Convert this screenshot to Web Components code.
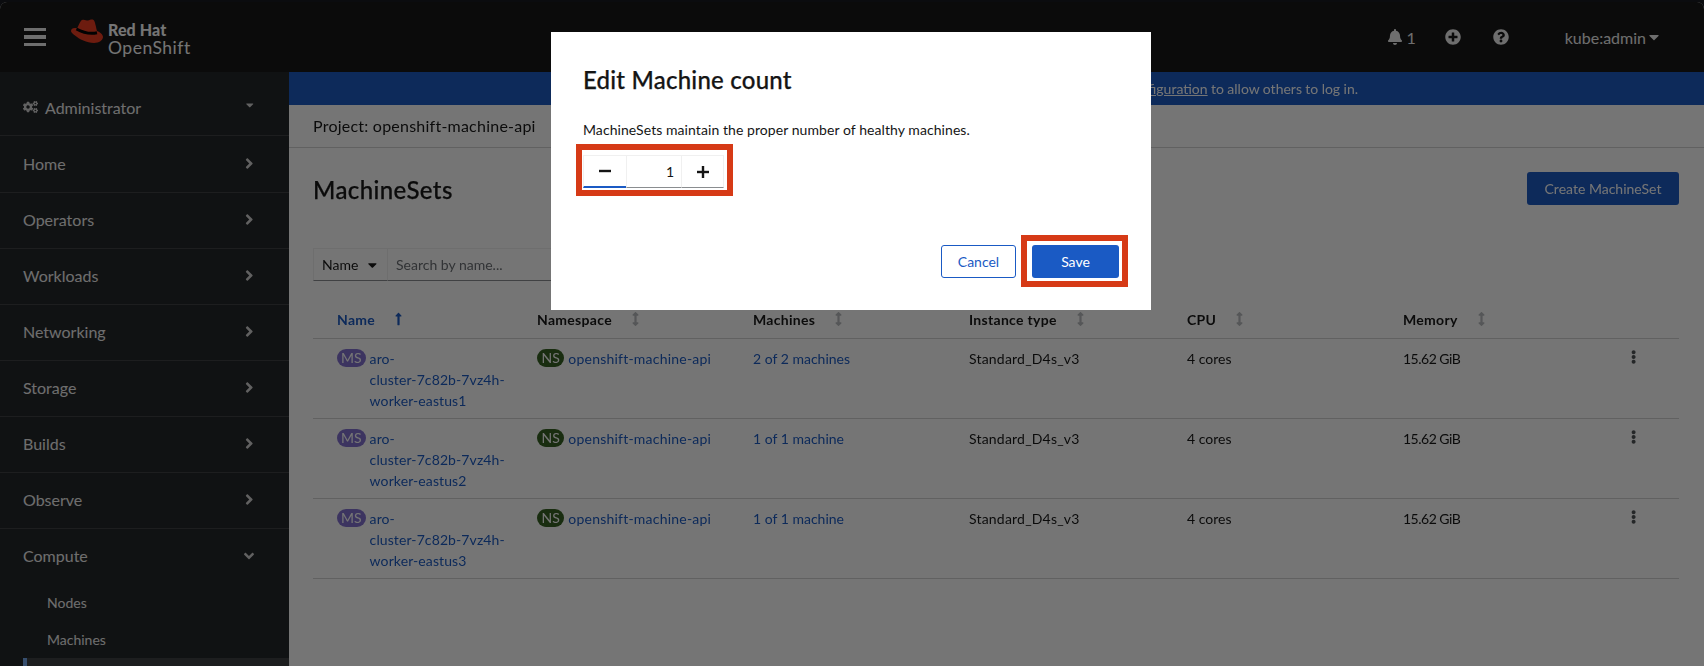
<!DOCTYPE html>
<html lang="en">
<head>
<meta charset="utf-8">
<title>MachineSets</title>
<style>
  html, body { margin: 0; height: 100%; overflow: hidden; background: #14181d; }
  body { font: 14px/21px Lato, "Noto Sans", sans-serif; color: #151515; }
</style>
</head>
<body>

<os-app>
  <os-masthead slot="top"></os-masthead>
  <os-sidebar slot="side">
    <nav-item perspective>Administrator</nav-item>
    <nav-item first>Home</nav-item>
    <nav-item>Operators</nav-item>
    <nav-item>Workloads</nav-item>
    <nav-item>Networking</nav-item>
    <nav-item>Storage</nav-item>
    <nav-item>Builds</nav-item>
    <nav-item>Observe</nav-item>
    <nav-item open>Compute</nav-item>
    <nav-sub>Nodes</nav-sub>
    <nav-sub>Machines</nav-sub>
    <nav-sub active></nav-sub>
  </os-sidebar>
  <info-banner><u>figuration</u> to allow others to log in.</info-banner>
  <project-bar>Project: openshift-machine-api</project-bar>
  <page-head>MachineSets</page-head>
  <filter-bar></filter-bar>
  <ms-table>
    <ms-row>
      <span slot="name">aro-<br>cluster-7c82b-7vz4h-<br>worker-eastus1</span>
      <span slot="machines">2 of 2 machines</span>
    </ms-row>
    <ms-row>
      <span slot="name">aro-<br>cluster-7c82b-7vz4h-<br>worker-eastus2</span>
      <span slot="machines">1 of 1 machine</span>
    </ms-row>
    <ms-row>
      <span slot="name">aro-<br>cluster-7c82b-7vz4h-<br>worker-eastus3</span>
      <span slot="machines">1 of 1 machine</span>
    </ms-row>
  </ms-table>
</os-app>

<edit-modal></edit-modal>

<script>
// fontawesome style paths, used all over the page
const ICONS = {
  bell: ['0 0 448 512', 'M224 512c35.32 0 63.97-28.65 63.97-64H160.03c0 35.35 28.65 64 63.97 64zm215.39-149.71c-19.32-20.76-55.47-51.99-55.47-154.29 0-77.7-54.48-139.9-127.94-155.16V32c0-17.67-14.32-32-31.98-32s-31.98 14.33-31.98 32v20.84C118.56 68.1 64.08 130.3 64.08 208c0 102.3-36.15 133.53-55.47 154.29-6 6.45-8.66 14.16-8.61 21.71.11 16.4 12.98 32 32.1 32h383.8c19.12 0 32-15.6 32.1-32 .05-7.55-2.61-15.27-8.61-21.71z'],
  plus: ['0 0 512 512', 'M256 8C119 8 8 119 8 256s111 248 248 248 248-111 248-248S393 8 256 8zm144 276c0 6.6-5.4 12-12 12h-92v92c0 6.6-5.4 12-12 12h-56c-6.6 0-12-5.4-12-12v-92h-92c-6.6 0-12-5.4-12-12v-56c0-6.6 5.4-12 12-12h92v-92c0-6.6 5.4-12 12-12h56c6.6 0 12 5.4 12 12v92h92c6.6 0 12 5.4 12 12v56z'],
  help: ['0 0 512 512', 'M504 256c0 136.997-111.043 248-248 248S8 392.997 8 256C8 119.083 119.043 8 256 8s248 111.083 248 248zM262.655 90c-54.497 0-89.255 22.957-116.549 63.758-3.536 5.286-2.353 12.415 2.715 16.258l34.699 26.31c5.205 3.947 12.621 3.008 16.665-2.122 17.864-22.658 30.113-35.797 57.303-35.797 20.429 0 45.698 13.148 45.698 32.958 0 14.976-12.363 22.667-32.534 33.976C247.128 238.528 216 254.941 216 296v4c0 6.627 5.373 12 12 12h56c6.627 0 12-5.373 12-12v-1.333c0-28.462 83.186-29.647 83.186-106.667 0-58.002-60.165-102-116.531-102zM256 338c-25.365 0-46 20.635-46 46 0 25.364 20.635 46 46 46s46-20.636 46-46c0-25.365-20.635-46-46-46z'],
  kebab: ['0 0 192 512', 'M96 184c39.8 0 72 32.2 72 72s-32.2 72-72 72-72-32.2-72-72 32.2-72 72-72zM24 80c0 39.8 32.2 72 72 72s72-32.2 72-72S135.8 8 96 8 24 40.2 24 80zm0 352c0 39.8 32.2 72 72 72s72-32.2 72-72-32.2-72-72-72-72 32.2-72 72z'],
  right: ['0 0 256 512', 'M224.3 273l-136 136c-9.4 9.4-24.6 9.4-33.9 0l-22.6-22.6c-9.4-9.4-9.4-24.6 0-33.9l96.4-96.4-96.4-96.4c-9.4-9.4-9.4-24.6 0-33.9L54.3 103c9.4-9.4 24.6-9.4 33.9 0l136 136c9.5 9.4 9.5 24.6.1 34z'],
  down: ['0 0 320 512', 'M143 352.3L7 216.3c-9.4-9.4-9.4-24.6 0-33.9l22.6-22.6c9.4-9.4 24.6-9.4 33.9 0l96.4 96.4 96.4-96.4c9.4-9.4 24.6-9.4 33.9 0l22.6 22.6c9.4 9.4 9.4 24.6 0 33.9l-136 136c-9.2 9.4-24.4 9.4-33.8 0z'],
  caret: ['0 0 320 512', 'M31.3 192h257.3c17.8 0 26.7 21.5 14.1 34.1L174.1 354.8c-7.8 7.8-20.5 7.8-28.3 0L17.2 226.1C4.6 213.5 13.5 192 31.3 192z'],
  sort: ['0 0 256 512', 'M214.059 377.941H168V134.059h46.059c21.382 0 32.09-25.851 16.971-40.971L144.971 7.029c-9.373-9.373-24.568-9.373-33.941 0L24.971 93.088c-15.119 15.119-4.411 40.971 16.971 40.971H88v243.882H41.941c-21.382 0-32.09 25.851-16.971 40.971l86.059 86.059c9.373 9.373 24.568 9.373 33.941 0l86.059-86.059c15.12-15.119 4.412-40.971-16.97-40.971z'],
  up: ['0 0 256 512', 'M88 166.059V468c0 6.627 5.373 12 12 12h56c6.627 0 12-5.373 12-12V166.059h46.059c21.382 0 32.09-25.851 16.971-40.971l-86.059-86.059c-9.373-9.373-24.569-9.373-33.941 0l-86.059 86.059c-15.119 15.119-4.411 40.971 16.971 40.971H88z'],
  cogs: ['0 0 640 512', 'M512.1 191l-8.2 14.3c-3 5.3-9.4 7.5-15.1 5.4-11.8-4.4-22.6-10.7-32.1-18.6-4.6-3.8-5.8-10.5-2.8-15.7l8.2-14.3c-6.9-8-12.3-17.3-15.9-27.4h-16.5c-6 0-11.2-4.3-12.2-10.3-2-12-2.1-24.6 0-37.1 1-6 6.2-10.4 12.2-10.4h16.5c3.6-10.1 9-19.4 15.9-27.4l-8.2-14.3c-3-5.2-1.9-11.9 2.8-15.7 9.5-7.9 20.4-14.2 32.1-18.6 5.7-2.1 12.1.1 15.1 5.4l8.2 14.3c10.5-1.9 21.2-1.9 31.7 0L552 6.3c3-5.3 9.4-7.5 15.1-5.4 11.8 4.4 22.6 10.7 32.1 18.6 4.6 3.8 5.8 10.5 2.8 15.7l-8.2 14.3c6.9 8 12.3 17.3 15.9 27.4h16.5c6 0 11.2 4.3 12.2 10.3 2 12 2.1 24.6 0 37.1-1 6-6.2 10.4-12.2 10.4h-16.5c-3.6 10.1-9 19.4-15.9 27.4l8.2 14.3c3 5.2 1.9 11.9-2.8 15.7-9.5 7.9-20.4 14.2-32.1 18.6-5.7 2.1-12.1-.1-15.1-5.4l-8.2-14.3c-10.4 1.9-21.2 1.9-31.7 0zm-10.5-58.8c38.5 29.6 82.4-14.3 52.8-52.8-38.5-29.7-82.4 14.3-52.8 52.8zM386.3 286.1l33.7 16.8c10.1 5.8 14.5 18.1 10.5 29.1-8.9 24.2-26.4 46.4-42.6 65.8-7.4 8.9-20.2 11.1-30.3 5.3l-29.1-16.8c-16 13.7-34.6 24.6-54.9 31.7v33.6c0 11.6-8.3 21.6-19.7 23.6-24.6 4.2-50.4 4.4-75.9 0-11.5-2-20-11.9-20-23.6V418c-20.3-7.2-38.9-18-54.9-31.7L74 403c-10 5.8-22.9 3.6-30.3-5.3-16.2-19.4-33.3-41.6-42.2-65.7-4-10.9.4-23.2 10.5-29.1l33.3-16.8c-3.9-20.9-3.9-42.4 0-63.4L12 205.8c-10.1-5.8-14.6-18.1-10.5-29 8.9-24.2 26-46.4 42.2-65.8 7.4-8.9 20.2-11.1 30.3-5.3l29.1 16.8c16-13.7 34.6-24.6 54.9-31.7V57.1c0-11.5 8.2-21.5 19.6-23.5 24.6-4.2 50.5-4.4 76-.1 11.5 2 20 11.9 20 23.6v33.6c20.3 7.2 38.9 18 54.9 31.7l29.1-16.8c10-5.8 22.9-3.6 30.3 5.3 16.2 19.4 33.2 41.6 42.1 65.8 4 10.9.1 23.2-10 29.1l-33.7 16.8c3.9 21 3.9 42.5 0 63.5zm-117.6 21.1c59.2-77-28.7-164.9-105.7-105.7-59.2 77 28.7 164.9 105.7 105.7zm243.4 182.7l-8.2 14.3c-3 5.3-9.4 7.5-15.1 5.4-11.8-4.4-22.6-10.7-32.1-18.6-4.6-3.8-5.8-10.5-2.8-15.7l8.2-14.3c-6.9-8-12.3-17.3-15.9-27.4h-16.5c-6 0-11.2-4.3-12.2-10.3-2-12-2.1-24.6 0-37.1 1-6 6.2-10.4 12.2-10.4h16.5c3.6-10.1 9-19.4 15.9-27.4l-8.2-14.3c-3-5.2-1.9-11.9 2.8-15.7 9.5-7.9 20.4-14.2 32.1-18.6 5.7-2.1 12.1.1 15.1 5.4l8.2 14.3c10.5-1.9 21.2-1.9 31.7 0l8.2-14.3c3-5.3 9.4-7.5 15.1-5.4 11.8 4.4 22.6 10.7 32.1 18.6 4.6 3.8 5.8 10.5 2.8 15.7l-8.2 14.3c6.9 8 12.3 17.3 15.9 27.4h16.5c6 0 11.2 4.3 12.2 10.3 2 12 2.1 24.6 0 37.1-1 6-6.2 10.4-12.2 10.4h-16.5c-3.6 10.1-9 19.4-15.9 27.4l8.2 14.3c3 5.2 1.9 11.9-2.8 15.7-9.5 7.9-20.4 14.2-32.1 18.6-5.7 2.1-12.1-.1-15.1-5.4l-8.2-14.3c-10.4 1.9-21.2 1.9-31.7 0zM501.6 431c38.5 29.6 82.4-14.3 52.8-52.8-38.5-29.6-82.4 14.3-52.8 52.8z']
}

// small helper, every element below is the same shape: styles + markup in an open shadow root
function define(tag, html, setup) {
  const template = document.createElement('template')
  template.innerHTML = html
  customElements.define(tag, class extends HTMLElement {
    constructor() {
      super()
      const shadow = this.attachShadow({ mode: 'open' })
      shadow.append(template.content.cloneNode(true))
      if (setup) setup.call(this, shadow)
    }
  })
}

customElements.define('os-icon', class extends HTMLElement {
  constructor() {
    super()
    this.attachShadow({ mode: 'open' })
  }

  static get observedAttributes() {
    return ['name', 'h']
  }

  attributeChangedCallback() {
    const icon = ICONS[this.getAttribute('name')]
    if (!icon) return
    const h = this.getAttribute('h') || 14
    this.shadowRoot.innerHTML = `
      <style>:host { display: inline-flex; flex: none; } svg { display: block; fill: currentColor; }</style>
      <svg viewBox="${icon[0]}" height="${h}"><path d="${icon[1]}"></path></svg>`
  }
})

define('os-app', `
  <style>
    :host {
      display: grid;
      grid-template-columns: 289px 1fr;
      grid-template-rows: 70px 1fr;
      position: fixed;
      inset: 2px 0 0 0;
      overflow: hidden;
      border-radius: 7px 7px 0 0;
      background: #fff;
    }
    .top { grid-column: 1 / 3; }
    .main { min-width: 0; display: flex; flex-direction: column; }
  </style>
  <div class="top"><slot name="top"></slot></div>
  <slot name="side"></slot>
  <div class="main"><slot></slot></div>
`)

define('os-masthead', `
  <style>
    :host { display: flex; align-items: center; height: 70px; background: #151515; color: #fff; }
    .burger { display: flex; flex-direction: column; gap: 4px; margin-left: 24px; width: 22px; }
    .burger i { display: block; height: 3.4px; background: #f0f0f0; }
    .hat { display: block; margin: -13px 0 0 25px; }
    .logo { margin: 4px 0 0 5px; font: 400 17.500px/18px Lato, sans-serif; letter-spacing: .5px; }
    .logo b { display: block; font-weight: 900; font-size: 16px; letter-spacing: .1px; }
    .right { margin-left: auto; margin-right: 45px; display: flex; align-items: center; color: #f0f0f0; font-size: 16px; }
    .count { margin-left: 4px; margin-right: 29px; }
    .gap { margin-right: 32px; display: flex; }
    .user { margin-left: 56px; display: flex; align-items: center; gap: 3px; }
  </style>
  <div class="burger"><i></i><i></i><i></i></div>
  <svg class="hat" width="32" height="24" viewBox="0 0 32 24">
    <path fill="#ee3a1e" d="M11 1C13 0 15 1.5 17 1.5 19 1 21 0 22.5 1 24 2 25 8 26 12 29 13 32 15.5 32 18 32 21 28 24 23 24 16 24 8 20 4 16.5 1.5 14.5 0 13.5 0 12 0 9.5 3 8.5 6 9.5 7.500 7 9 2 11 1Z"/>
    <path fill="none" stroke="#000" stroke-width="3" d="M5.500 10C10 12.500 18 15.500 26 13.800"/>
  </svg>
  <div class="logo"><b>Red Hat</b>OpenShift</div>
  <div class="right">
    <os-icon name="bell" h="16"></os-icon><span class="count">1</span>
    <span class="gap"><os-icon name="plus" h="16"></os-icon></span>
    <span style="display:flex"><os-icon name="help" h="16"></os-icon></span>
    <span class="user">kube:admin<os-icon name="caret" h="16"></os-icon></span>
  </div>
`)

define('os-sidebar', `
  <style>
    :host { display: block; background: #212427; color: #f0f0f0; overflow: hidden; min-height: 0; }
  </style>
  <slot></slot>
`)

define('nav-item', `
  <style>
    :host {
      display: flex;
      align-items: center;
      height: 53px;
      padding: 0 34px 2px 23px;
      border-bottom: 1px solid #3c3f42;
      font-size: 16px;
    }
    :host([first]) { height: 55px; padding-bottom: 1px; }
    :host([perspective]) { height: 56px; padding-top: 7px; padding-bottom: 0; }
    :host([open]) { border-bottom: 0; }
    .label { flex: 1; display: flex; align-items: center; gap: 7px; }
    .chev { display: flex; color: #d2d2d2; width: 12px; justify-content: center; }
    :host([perspective]) .chev { position: relative; left: 1px; top: -2px; }
  </style>
  <div class="label"><slot></slot></div>
  <div class="chev"><os-icon></os-icon></div>
`, function (shadow) {
  const icon = shadow.querySelector('.chev os-icon')
  if (this.hasAttribute('open')) {
    icon.setAttribute('h', '16')
    icon.setAttribute('name', 'down')
  } else if (this.hasAttribute('perspective')) {
    icon.setAttribute('h', '12')
    icon.setAttribute('name', 'caret')
  } else {
    icon.setAttribute('h', '17')
    icon.setAttribute('name', 'right')
  }
  if (this.hasAttribute('perspective')) {
    const cog = document.createElement('os-icon')
    cog.setAttribute('name', 'cogs')
    cog.setAttribute('h', '12')
    cog.style.color = '#d2d2d2'
    shadow.querySelector('.label').prepend(cog)
  }
})

define('nav-sub', `
  <style>
    :host {
      display: flex;
      align-items: center;
      height: 37px;
      padding-left: 47px;
      font-size: 14px;
    }
    :host([active]) { margin-left: 23px; padding-left: 24px; height: 40px; background: #3c3f42; border-left: 4px solid #73a8f0; }
  </style>
  <slot></slot>
`)

define('info-banner', `
  <style>
    :host {
      display: block;
      height: 33px;
      padding-right: 346px;
      background: #1a5ac4;
      color: #fff;
      text-align: right;
      line-height: 33px;
      white-space: nowrap;
      word-spacing: -.2px;
    }
  </style>
  <slot></slot>
`)

define('project-bar', `
  <style>
    :host {
      display: flex;
      align-items: center;
      height: 40px;
      padding: 0 0 2px 24px;
      border-bottom: 1px solid #d2d2d2;
      font-size: 16px;
      letter-spacing: .23px;
    }
  </style>
  <slot></slot>
`)

define('page-head', `
  <style>
    :host {
      display: flex;
      justify-content: space-between;
      padding: 24px 25px 0 24px;
      height: 36px;
    }
    h1 { margin: 0; font-size: 24px; line-height: 36px; font-weight: 500; letter-spacing: .4px; -webkit-text-stroke: .25px; }
    button {
      height: 33px;
      width: 152px;
      padding: 0;
      border: 0;
      border-radius: 3px;
      background: #1a5ac4;
      color: #fff;
      font: inherit;
    }
  </style>
  <h1><slot></slot></h1>
  <button>Create MachineSet</button>
`)

define('filter-bar', `
  <style>
    :host { display: flex; margin: 40px 0 0 24px; height: 33px; color: #151515; }
    .drop, .search {
      box-sizing: border-box;
      height: 33px;
      display: flex;
      align-items: center;
      border: 1px solid #f0f0f0;
      border-bottom: 1px solid #8a8d90;
    }
    .drop { width: 75px; padding-left: 8px; gap: 10px; }
    .search { width: 300px; padding-left: 8px; border-left: 0; color: #6a6e73; }
  </style>
  <div class="drop">Name <os-icon name="caret" h="14"></os-icon></div>
  <div class="search">Search by name...</div>
`)

define('ms-table', `
  <style>
    :host {
      display: block;
      margin: 0 25px 0 24px;
      --cols: 224px 216px 216px 218px 216px 217px 1fr;
    }
    .head {
      display: grid;
      grid-template-columns: var(--cols);
      align-items: start;
      height: 29px;
      padding-top: 28px;
      border-bottom: 1px solid #d2d2d2;
      font-weight: 700;
      letter-spacing: .3px;
    }
    .th { display: flex; align-items: center; gap: 20px; }
    .th:first-child { color: #1a5ac4; padding-left: 24px; }
    .th os-icon { color: #b8bbbe; position: relative; top: -1px; }
    .th:first-child os-icon { color: #1a5ac4; }
  </style>
  <div class="head">
    <div class="th"><span>Name</span><os-icon name="up" h="14"></os-icon></div>
    <div class="th"><span>Namespace</span><os-icon name="sort" h="14"></os-icon></div>
    <div class="th"><span>Machines</span><os-icon name="sort" h="14"></os-icon></div>
    <div class="th"><span>Instance type</span><os-icon name="sort" h="14"></os-icon></div>
    <div class="th"><span>CPU</span><os-icon name="sort" h="14"></os-icon></div>
    <div class="th"><span>Memory</span><os-icon name="sort" h="14"></os-icon></div>
    <div class="th"></div>
  </div>
  <slot></slot>
`)

define('res-badge', `
  <style>
    :host {
      display: inline-flex;
      flex: none;
      align-items: center;
      justify-content: center;
      height: 18px;
      padding: 0 var(--pad, 4.500px);
      margin-top: 1px;
      border-radius: 9px;
      background: var(--bg);
      color: #fff;
      font-size: 14px;
      line-height: 18px;
      letter-spacing: 0;
    }
  </style>
  <slot></slot>
`)

define('ms-row', `
  <style>
    :host {
      display: grid;
      grid-template-columns: var(--cols);
      height: 70px;
      padding-top: 9px;
      border-bottom: 1px solid #d2d2d2;
    }
    .name { display: flex; gap: 4px; padding-left: 24px; color: #1a5ac4; white-space: nowrap; letter-spacing: .1px; }
    .ns { display: flex; gap: 4px; color: #1a5ac4; letter-spacing: .22px; }
    .machines { color: #1a5ac4; }
    .type { letter-spacing: .2px; }
    .mem { letter-spacing: -.5px; }
    .kebab { padding-left: 11px; color: #4f5255; }
  </style>
  <div class="name"><res-badge style="--bg:#8270d0;--pad:4px">MS</res-badge><div><slot name="name"></slot></div></div>
  <div class="ns"><res-badge style="--bg:#33601f">NS</res-badge>openshift-machine-api</div>
  <div class="machines"><slot name="machines"></slot></div>
  <div class="type">Standard_D4s_v3</div>
  <div>4 cores</div>
  <div class="mem">15.62 GiB</div>
  <div class="kebab"><os-icon name="kebab" h="14"></os-icon></div>
`)

define('num-spinner', `
  <style>
    :host { display: flex; width: 141px; height: 33px; color: #151515; }
    div {
      box-sizing: border-box;
      display: flex;
      align-items: center;
      justify-content: center;
      border: 1px solid #f0f0f0;
      border-bottom: 1px solid #8a8d90;
    }
    .minus { width: 43px; border-bottom: 2px solid #1a5ac4; border-right: 0; }
    .val { width: 55px; justify-content: flex-end; padding-right: 7px; border-right: 0; }
    .plus { width: 43px; }
    svg { display: block; fill: #151515; }
  </style>
  <div class="minus"><svg width="12" height="12" viewBox="0 0 12 12"><rect x="0" y="4.800" width="12" height="2.400"/></svg></div>
  <div class="val">1</div>
  <div class="plus"><svg width="12" height="12" viewBox="0 0 12 12"><rect x="0" y="4.800" width="12" height="2.400"/><rect x="4.800" y="0" width="2.400" height="12"/></svg></div>
`)

define('mark-box', `
  <style>
    :host { display: inline-flex; border: 6px solid #d63a16; }
  </style>
  <slot></slot>
`)

define('edit-modal', `
  <style>
    :host {
      position: fixed;
      inset: 0;
      z-index: 10;
      background: rgba(3, 3, 3, .55);
    }
    .box {
      box-sizing: border-box;
      width: 600px;
      height: 278px;
      margin: 32px 0 0 551px;
      padding: 30px 32px 0;
      background: #fff;
      color: #151515;
    }
    h2 { margin: 0; font-size: 24px; line-height: 36px; font-weight: 500; letter-spacing: .22px; -webkit-text-stroke: .25px; }
    p { margin: 21px 0 4px; letter-spacing: .07px; }
    mark-box.a { margin-left: -7px; padding: 5px 3px 2px 1px; }
    .foot { display: flex; justify-content: flex-end; align-items: flex-start; gap: 5px; margin: 39px -9px 0 0; }
    mark-box.b { padding: 4px 3px 3px 5px; }
    button {
      box-sizing: border-box;
      height: 33px;
      padding: 0;
      border-radius: 3px;
      font: inherit;
      display: block;
    }
    .cancel { width: 75px; margin-top: 10px; background: #fff; border: 1px solid #1a5ac4; color: #1a5ac4; }
    .save { width: 87px; background: #1a5ac4; border: 0; color: #fff; }
  </style>
  <div class="box">
    <h2>Edit Machine count</h2>
    <p>MachineSets maintain the proper number of healthy machines.</p>
    <mark-box class="a"><num-spinner></num-spinner></mark-box>
    <div class="foot">
      <button class="cancel">Cancel</button>
      <mark-box class="b"><button class="save">Save</button></mark-box>
    </div>
  </div>
`)
</script>
</body>
</html>
